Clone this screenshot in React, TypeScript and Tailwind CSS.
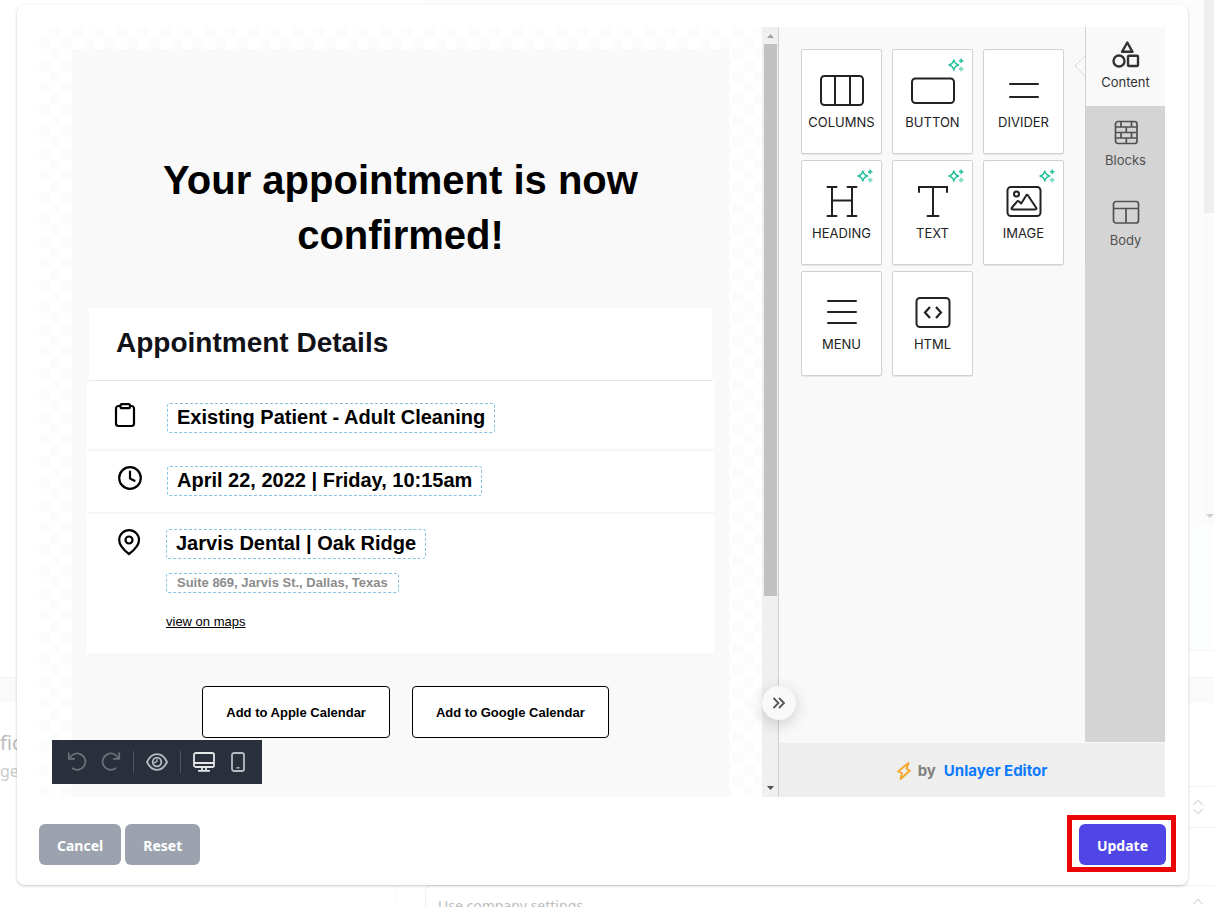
import React, { useState } from 'react';
import { ChevronsUpDown } from 'lucide-react';

type IconProps = { className?: string };

const ColumnsIcon: React.FC<IconProps> = ({ className }) => (
    <svg viewBox="0 0 44 31" width="44" height="31" fill="none" stroke="currentColor" strokeWidth="2" className={className}>
        <rect x="1" y="1" width="42" height="29" rx="3.5" />
        <path d="M15 1v29M30 1v29" />
    </svg>
);

const ButtonIcon: React.FC<IconProps> = ({ className }) => (
    <svg viewBox="0 0 44 31" width="44" height="31" fill="none" stroke="currentColor" strokeWidth="2" className={className}>
        <rect x="1" y="3.5" width="42" height="24.5" rx="3.5" />
    </svg>
);

const DividerIcon: React.FC<IconProps> = ({ className }) => (
    <svg viewBox="0 0 44 31" width="44" height="31" fill="none" stroke="currentColor" strokeWidth="2" strokeLinecap="round" className={className}>
        <path d="M8 9h28M8 22h28" />
    </svg>
);

const HeadingIcon: React.FC<IconProps> = ({ className }) => (
    <svg viewBox="0 0 44 31" width="44" height="31" fill="none" stroke="currentColor" strokeWidth="2" strokeLinecap="round" className={className}>
        <path d="M7.5 1h9M27.5 1h9M7.5 30h9M27.5 30h9M12 1v29M32 1v29M12 14.5h20" />
    </svg>
);

const TextIcon: React.FC<IconProps> = ({ className }) => (
    <svg viewBox="0 0 44 31" width="44" height="31" fill="none" stroke="currentColor" strokeWidth="2" strokeLinecap="round" className={className}>
        <path d="M8 6V1h28v5M22 1v29M16.5 30h11" />
    </svg>
);

const ImageIcon: React.FC<IconProps> = ({ className }) => (
    <svg viewBox="0 0 44 31" width="44" height="31" fill="none" stroke="currentColor" strokeWidth="2" strokeLinejoin="round" className={className}>
        <rect x="5.5" y="1" width="33" height="29" rx="3.5" />
        <circle cx="14.5" cy="8" r="2.5" />
        <path d="M11 23.5h22c1.500 0 1.800-.8 1-2L26 9.500c-.6-1-1.200-1-1.800 0l-5 8-2.500-2.300c-.6-.5-1.100-.4-1.500.2L10 21.500c-.8 1.200-.4 2 1 2Z" />
    </svg>
);

const MenuIcon: React.FC<IconProps> = ({ className }) => (
    <svg viewBox="0 0 44 31" width="44" height="31" fill="none" stroke="currentColor" strokeWidth="2" strokeLinecap="round" className={className}>
        <path d="M8 4h28M8 15h28M8 26h28" />
    </svg>
);

const HtmlIcon: React.FC<IconProps> = ({ className }) => (
    <svg viewBox="0 0 44 31" width="44" height="31" fill="none" stroke="currentColor" strokeWidth="2" className={className}>
        <rect x="5.5" y="1" width="33" height="29" rx="3.5" />
        <path d="M19 10l-5 5.500 5 5.500M25 10l5 5.500-5 5.500" strokeWidth="2.2" />
    </svg>
);

const SparkleIcon: React.FC<IconProps> = ({ className }) => (
    <svg viewBox="0 0 16 14" width="16" height="14" fill="none" stroke="currentColor" strokeWidth="1.4" className={className}>
        <path d="M5.800 2c.7 3 1.800 4.200 4.800 5-3 .8-4.100 2-4.800 5-.7-3-1.800-4.200-4.800-5 3-.8 4.100-2 4.800-5Z" strokeLinejoin="round" />
        <path d="M13.2.5v4.400M11 2.700h4.400" strokeWidth="1.5" />
        <path d="M13.2 8.800v4.400M11 11h4.400" strokeWidth="2.2" opacity=".55" />
    </svg>
);

const ContentIcon: React.FC<IconProps> = ({ className }) => (
    <svg viewBox="0 0 28 27" width="28" height="27" fill="none" stroke="currentColor" strokeWidth="2.4" strokeLinejoin="round" className={className}>
        <path d="M15.300 1.500l5.200 9.300H10Z" />
        <circle cx="7" cy="20" r="5.500" />
        <rect x="16" y="14.700" width="10" height="10.300" rx="1" />
    </svg>
);

const BlocksIcon: React.FC<IconProps> = ({ className }) => (
    <svg viewBox="0 0 28 27" width="28" height="27" fill="none" stroke="currentColor" strokeWidth="1.7" className={className}>
        <rect x="3.5" y="2.500" width="21.500" height="22" rx="2.500" />
        <path d="M3.500 8H25M3.500 13.500H25M3.500 19H25M9 2.500V8M19.500 2.500V8M14.300 8v5.500M9 13.500V19M19.500 13.500V19M14.300 19v5.500" />
    </svg>
);

const BodyIcon: React.FC<IconProps> = ({ className }) => (
    <svg viewBox="0 0 28 27" width="28" height="27" fill="none" stroke="currentColor" strokeWidth="1.7" className={className}>
        <rect x="1.500" y="2.500" width="25" height="21.500" rx="2.500" />
        <path d="M1.500 9.500h25M14 9.500v14.500" />
    </svg>
);

const ClipboardIcon: React.FC<IconProps> = ({ className }) => (
    <svg viewBox="0 0 22 25" width="22" height="25" fill="none" stroke="currentColor" strokeWidth="2.2" strokeLinejoin="round" className={className}>
        <path d="M6.500 3H4.500A2.500 2.500 0 0 0 2 5.500V20.500A2.500 2.500 0 0 0 4.500 23h13a2.500 2.500 0 0 0 2.500-2.500V5.500A2.500 2.500 0 0 0 17.500 3h-2" />
        <rect x="6.500" y="1.200" width="9.500" height="4" rx="1.500" />
    </svg>
);

const ClockIcon: React.FC<IconProps> = ({ className }) => (
    <svg viewBox="0 0 24 24" width="24" height="24" fill="none" stroke="currentColor" strokeWidth="2.2" strokeLinecap="round" strokeLinejoin="round" className={className}>
        <circle cx="12" cy="12" r="10.800" />
        <path d="M12 5.500V12.500l4.500 2.300" />
    </svg>
);

const PinIcon: React.FC<IconProps> = ({ className }) => (
    <svg viewBox="0 0 24 27" width="24" height="27" fill="none" stroke="currentColor" strokeWidth="2.2" strokeLinejoin="round" className={className}>
        <path d="M21 11c0 6.500-6 11-10 14C7 22 1.200 17.500 1.200 11a9.900 9.900 0 0 1 19.800 0Z" />
        <circle cx="11" cy="11" r="3.500" />
    </svg>
);

const UndoIcon: React.FC<IconProps> = ({ className }) => (
    <svg viewBox="0 0 20 20" width="20" height="20" fill="none" stroke="currentColor" strokeWidth="1.8" className={className}>
        <path d="M1.800.5v6.300H8M2.500 6.800A8.200 8.200 0 1 1 5 16" />
    </svg>
);

const EyeIcon: React.FC<IconProps> = ({ className }) => (
    <svg viewBox="0 0 22 18" width="22" height="18" fill="none" stroke="currentColor" strokeWidth="1.8" className={className}>
        <path d="M1 9c2.400-5 6-7.800 10-7.800S18.600 4 21 9c-2.400 5-6 7.800-10 7.800S3.400 14 1 9Z" />
        <circle cx="11" cy="9" r="4.300" />
        <path d="M7.800 9.500a2.600 2.600 0 0 0 3.200-3.300" strokeWidth="1.400" />
    </svg>
);

const DesktopIcon: React.FC<IconProps> = ({ className }) => (
    <svg viewBox="0 0 22 20" width="22" height="20" fill="none" stroke="currentColor" strokeWidth="1.8" className={className}>
        <rect x="1" y="1" width="20" height="14" rx="1.800" />
        <path d="M1 11h20M5 18.800h12M9 15v3.500M13 15v3.500" />
    </svg>
);

const MobileIcon: React.FC<IconProps> = ({ className }) => (
    <svg viewBox="0 0 14 20" width="14" height="20" fill="none" stroke="currentColor" strokeWidth="1.8" className={className}>
        <rect x="1" y="1" width="12" height="18" rx="2" />
        <path d="M5.500 15.800h3" strokeWidth="1.400" />
    </svg>
);

const tools = [
    { label: 'COLUMNS', icon: ColumnsIcon, ai: false },
    { label: 'BUTTON', icon: ButtonIcon, ai: true },
    { label: 'DIVIDER', icon: DividerIcon, ai: false },
    { label: 'HEADING', icon: HeadingIcon, ai: true },
    { label: 'TEXT', icon: TextIcon, ai: true },
    { label: 'IMAGE', icon: ImageIcon, ai: true },
    { label: 'MENU', icon: MenuIcon, ai: false },
    { label: 'HTML', icon: HtmlIcon, ai: false },
];

const tabs = [
    { label: 'Content', icon: ContentIcon },
    { label: 'Blocks', icon: BlocksIcon },
    { label: 'Body', icon: BodyIcon },
];

const MergeTag: React.FC<{ children: React.ReactNode }> = ({ children }) => (
    <div className="w-fit rounded-[3px] border border-dashed border-[#85c3e6] px-[9px] pb-[2px] text-xl leading-[26px] font-bold">{children}</div>
);

const SettingsPage = () => (
    <div className="flex min-h-screen flex-col font-['Noto_Sans',sans-serif]">
        <div className="flex h-[678px] border-b border-[#f3f4f5]">
            <div className="w-[397px] border-r border-[#fafafa]" />
            <div className="flex flex-1 flex-col pl-7">
                <div className="flex h-[525px] bg-[#fcfcfc]">
                    <div className="flex-1" />
                    <div className="flex w-[10px] flex-col justify-between overflow-hidden bg-[#fafafa]">
                        <div className="h-[213px] bg-[#efefef]" />
                        <svg viewBox="0 0 10 14" width="10" height="14" className="text-[#cfcfcf]">
                            <path d="M2 3h8L6 7Z" fill="currentColor" />
                        </svg>
                    </div>
                </div>
                <div className="h-[126px] border-b border-[#f6f6f6] bg-[#fcfefe]" />
            </div>
        </div>
        <div className="h-[25px] bg-[#fafafa]" />
        <div className="flex h-[204px] overflow-hidden">
            <div className="w-[397px] border-r border-[#fafafa] pt-6 text-[#bcbcbc]">
                <p className="text-xl leading-8">fic</p>
                <p className="text-base leading-6 text-[#cccccc]">ge</p>
            </div>
            <div className="flex flex-1 flex-col gap-[57px] pt-[83px] pl-7">
                {['', 'Use company settings'].map((value, index) => (
                    <div key={index} className="relative h-[42px] shrink-0">
                        <select
                            aria-label={index === 0 ? 'Reminder' : 'Confirmation'}
                            className="h-full w-full appearance-none rounded-l-md border border-r-0 border-[#f1f1f1] bg-transparent px-3 text-sm text-[#bdbdbd]"
                        >
                            <option>{value}</option>
                        </select>
                        <ChevronsUpDown size={20} className="pointer-events-none absolute top-[11px] right-[6px] text-[#e2e2e6]" />
                    </div>
                ))}
            </div>
        </div>
    </div>
);

const EmailCanvas = () => (
    <div className="relative min-w-0 flex-1 overflow-hidden bg-[repeating-conic-gradient(#fcfcfc_0_25%,#ffffff_0_50%)] bg-[length:22px_22px] px-[33px] pt-[22px] font-['Liberation_Sans',Arial,sans-serif] text-black">
        <div className="h-full bg-[#f9f9f9] px-[15px] pt-[104px]">
            <h1 className="mx-auto max-w-[520px] text-center text-[40px] leading-[55px] font-bold">Your appointment is now confirmed!</h1>
            <div className="mx-[2px] mt-[45px] border-b border-[#e5e5e5] bg-white px-[27px] pt-[15px] pb-[17px]">
                <h2 className="text-[28px] leading-10 font-bold text-[#111118]">Appointment Details</h2>
            </div>
            <div className="divide-y-2 divide-[#f6f6f6] bg-white">
                <div className="flex items-start pt-[22px] pb-4 pl-[27px]">
                    <ClipboardIcon className="mr-[31px]" />
                    <MergeTag>Existing Patient - Adult Cleaning</MergeTag>
                </div>
                <div className="flex items-start pt-[15px] pb-4 pl-[31px]">
                    <ClockIcon className="mr-[25px]" />
                    <MergeTag>April 22, 2022 | Friday, 10:15am</MergeTag>
                </div>
                <div className="flex items-start pt-[15px] pb-[23px] pl-[31px]">
                    <PinIcon className="mr-6" />
                    <div>
                        <MergeTag>Jarvis Dental | Oak Ridge</MergeTag>
                        <div className="mt-[14px] w-fit rounded-[3px] border border-dashed border-[#85c3e6] px-[10px] text-[13px] leading-[18px] font-bold text-[#8c8c8c]">
                            Suite 869, Jarvis St., Dallas, Texas
                        </div>
                        <a href="#maps" className="mt-[21px] block w-fit text-[13px] leading-4 underline">view on maps</a>
                    </div>
                </div>
            </div>
            <div className="mt-[33px] flex justify-center gap-[22px] pl-[10px]">
                <button type="button" className="h-[52px] rounded border border-black bg-white px-[23px] pt-[2px] text-[13px] font-bold">Add to Apple Calendar</button>
                <button type="button" className="h-[52px] rounded border border-black bg-white px-[23px] pt-[2px] text-[13px] font-bold">Add to Google Calendar</button>
            </div>
        </div>

        <div className="absolute bottom-[13px] left-[13px] flex h-11 w-[210px] items-center bg-[#2a303b] pl-[15px] text-[#b8bcc2]">
            <button type="button" aria-label="Undo" className="text-[#6a6f78]"><UndoIcon /></button>
            <button type="button" aria-label="Redo" className="ml-[14px] text-[#6a6f78]"><UndoIcon className="-scale-x-100" /></button>
            <div className="mx-3 h-[22px] w-px bg-[#50555f]" />
            <button type="button" aria-label="Preview"><EyeIcon /></button>
            <div className="mx-3 h-[22px] w-px bg-[#50555f]" />
            <button type="button" aria-label="Desktop" className="text-[#e4e6e8]"><DesktopIcon /></button>
            <button type="button" aria-label="Mobile" className="ml-4"><MobileIcon /></button>
        </div>
    </div>
);

const Scrollbar = () => (
    <div className="flex w-4 flex-col items-center bg-[#f0f0f0]">
        <svg viewBox="0 0 16 17" width="16" height="17">
            <path d="M5 11h7L8.500 7Z" fill="#a3a3a3" />
        </svg>
        <div className="ml-px h-[552px] w-[13px] bg-[#c1c1c1]" />
        <svg viewBox="0 0 16 17" width="16" height="17" className="mt-auto">
            <path d="M5 6h7L8.500 10Z" fill="#505050" />
        </svg>
    </div>
);

const ToolsPanel = () => {
    const [activeTab, setActiveTab] = useState('Content');

    return (
        <div className="relative flex w-[387px] flex-col border-l border-[#d0d0d0] bg-[#f9f9f9] font-['Inter',sans-serif]">
            <div className="flex flex-1">
                <div className="relative flex-1 px-[21px] pt-[22px] pl-[22px]">
                    <div className="grid grid-cols-3 gap-x-[10px] gap-y-[6px]">
                        {tools.map(({ label, icon: Icon, ai }) => (
                            <button
                                key={label}
                                type="button"
                                className="relative flex h-[105px] flex-col items-center rounded-[2px] border border-[#d2d2d2] bg-white pt-[25px] text-[13px] text-[#222222] shadow-[0_1px_1px_rgba(0,0,0,0.08)]"
                            >
                                <Icon />
                                <span className="mt-2 leading-4">{label}</span>
                                {ai && <SparkleIcon className="absolute top-2 right-2 text-[#22c19b]" />}
                            </button>
                        ))}
                    </div>
                    <svg viewBox="0 0 11 20" width="11" height="20" className="absolute top-[29px] right-0" fill="none" stroke="#d6d6d6">
                        <path d="M11 0L1 10l10 10" />
                    </svg>
                </div>
                <div className="flex w-20 flex-col bg-[#d4d4d4]">
                    {tabs.map(({ label, icon: Icon }) => (
                        <button
                            key={label}
                            type="button"
                            onClick={() => setActiveTab(label)}
                            className={`flex flex-col items-center border-l border-[#d0d0d0] text-[13px] first:h-[79px] first:pt-[14px] h-20 pt-[13px] ${activeTab === label ? 'bg-[#f9f9f9] text-[#333333]' : 'text-[#505050]'}`}
                        >
                            <Icon />
                            <span className="mt-[6px] leading-4">{label}</span>
                        </button>
                    ))}
                </div>
            </div>
            <div className="mt-px flex h-[54px] items-center justify-center bg-[#eeeeee] pt-[2px] text-[15px] font-bold text-[#808080]">
                <svg viewBox="0 0 14 18" width="14" height="18" fill="none" stroke="#f5a623" strokeWidth="1.8" strokeLinejoin="round" className="mr-[7px]">
                    <path d="M11.500 1L1 9.500l4 1.500-1.500 6L13 8.500 9.500 7Z" />
                </svg>
                by
                <a href="#unlayer" className="ml-2 text-[#0b7bff]">Unlayer Editor</a>
            </div>
            <button
                type="button"
                aria-label="Collapse panel"
                className="absolute bottom-[77px] -left-[17px] flex h-[34px] w-[34px] items-center justify-center rounded-full bg-[#f9f9f9] text-[#555555] shadow-[0_4px_16px_rgba(0,0,0,0.18)]"
            >
                <svg viewBox="0 0 14 12" width="14" height="12" fill="none" stroke="currentColor" strokeWidth="1.8">
                    <path d="M1.500 1l5 5-5 5M7 1l5 5-5 5" />
                </svg>
            </button>
        </div>
    );
};

const App: React.FC = () => {
    return (
        <div className="relative min-h-screen overflow-hidden bg-white">
            <SettingsPage />
            <div
                role="dialog"
                aria-label="Email editor"
                className="absolute top-[5px] right-[26px] left-[17px] rounded-lg bg-white px-[22px] pt-[22px] pb-5 shadow-[0_1px_3px_rgba(0,0,0,0.22)]"
            >
                <div className="mr-px flex h-[770px]">
                    <EmailCanvas />
                    <Scrollbar />
                    <ToolsPanel />
                </div>
                <div className="mt-[27px] flex items-center gap-1 font-['Noto_Sans',sans-serif] text-sm font-bold text-white">
                    <button type="button" className="h-[41px] rounded-md bg-[#9ca3af] px-[18px] pt-[2px]">Cancel</button>
                    <button type="button" className="h-[41px] rounded-md bg-[#9ca3af] px-[18px] pt-[2px]">Reset</button>
                    <div className="relative ml-auto">
                        <button type="button" className="h-[41px] rounded-md bg-[#4f46e5] px-[18px] pt-[2px]">Update</button>
                        <div className="pointer-events-none absolute -top-[9px] -right-[10px] -bottom-[7px] -left-3 border-[5px] border-[#ea0606]" />
                    </div>
                </div>
            </div>
        </div>
    );
};

export default App;
